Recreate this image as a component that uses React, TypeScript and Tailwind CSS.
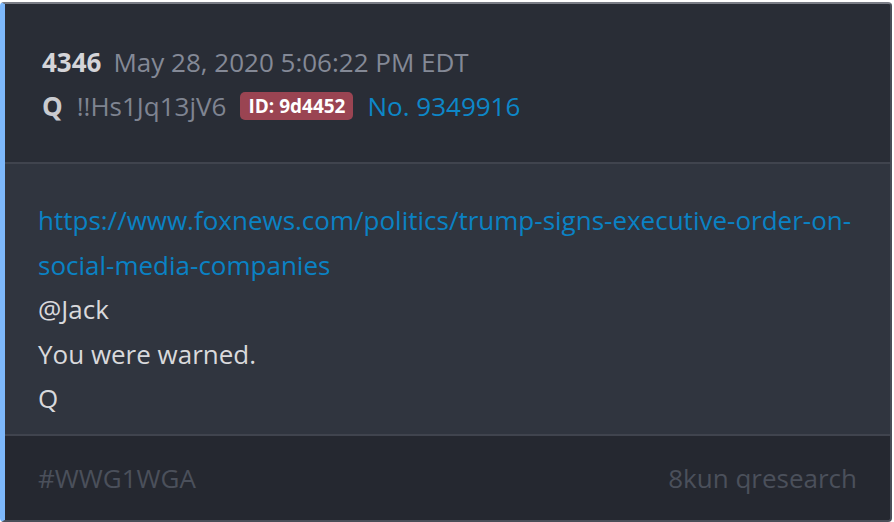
export default function App() {
  return (
    <div className="w-[894px] h-[522px] bg-white" style={{ fontFamily: "'Open Sans', 'Noto Sans', sans-serif" }}>
      <div className="w-[892px] h-[520px] mt-[2px] flex flex-col overflow-hidden rounded-[4px] border-l-[5px] border-l-[#7db8fb] border-t-2 border-t-[#7a7d86] border-r-2 border-r-[#4a4e58] border-b-2 border-b-[#4a4e58] bg-[#292d36]">
        <div className="h-[158px] flex flex-col px-[37px] pt-[36px] bg-[#292d36]">
          <div className="flex items-center gap-[12px] h-[44px]">
            <span className="text-[26px] font-bold text-[#d4d4d8]">4346</span>
            <span className="text-[26px] text-[#848996]">May 28, 2020 5:06:22 PM EDT</span>
          </div>
          <div className="flex items-center gap-[14px] h-[44px]">
            <span className="text-[26px] font-bold text-[#c9cbd0]">Q</span>
            <span className="text-[26px] text-[#7f8491]">!!Hs1Jq13jV6</span>
            <span className="rounded-[5px] bg-[#9a4452] px-[8px] h-[28px] flex items-center text-[19px] font-bold text-white">ID: 9d4452</span>
            <span className="text-[26px] text-[#0d87c8]">No. 9349916</span>
          </div>
        </div>
        <div className="h-[2px] bg-[#40444e]" />
        <div className="h-[270px] bg-[#30353f] px-[33px] pt-[34px] text-[26px] leading-[44.5px] text-[#d9d9dc]">
          <div className="text-[#0a82c4]">
            https://www.foxnews.com/politics/trump-signs-executive-order-on-social-media-companies
          </div>
          <div>@Jack</div>
          <div>You were warned.</div>
          <div>Q</div>
        </div>
        <div className="h-[2px] bg-[#40444e]" />
        <div className="flex-1 bg-[#252830] flex items-center justify-between px-[33px] text-[26px] text-[#4b505b]">
          <span>#WWG1WGA</span>
          <span>8kun qresearch</span>
        </div>
      </div>
    </div>
  )
}
